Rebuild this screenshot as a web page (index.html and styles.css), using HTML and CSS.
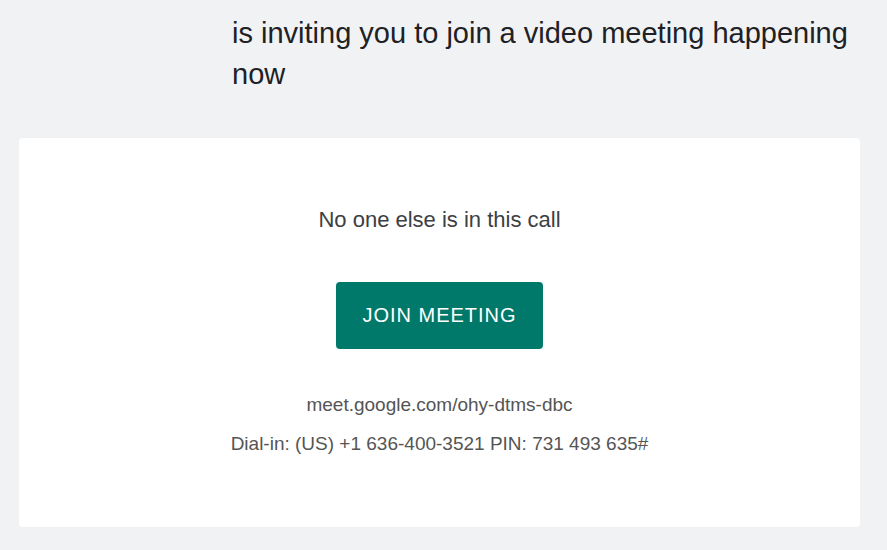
FILE: index.html
```html
<!DOCTYPE html>
<html>
<head>
    <title>Meeting Invite</title>
    <link rel="stylesheet" href="styles.css">
</head>
<body>
    <div class="page">
        <div class="invite-header">
            <p class="invite-text">is inviting you to join a video meeting happening now</p>
        </div>
        <div class="card">
            <p class="status">No one else is in this call</p>
            <a class="join-button" href="#">JOIN MEETING</a>
            <p class="meet-link">meet.google.com/ohy-dtms-dbc</p>
            <p class="dial-in">Dial-in: (US) +1 636-400-3521 PIN: 731 493 635#</p>
        </div>
    </div>
</body>
</html>
```

FILE: styles.css
```css
body {
    margin: 0;
    background: #f1f2f4;
    font-family: "Liberation Sans", Arial, sans-serif;
}
.page {
    padding: 13px 27px 22px 19px;
}
.invite-header {
    padding-left: 213px;
    height: 125px;
}
.invite-text {
    margin: 0;
    font-size: 29px;
    line-height: 41px;
    color: #202124;
}
.card {
    background: #fff;
    border-radius: 4px;
    height: 389px;
    box-sizing: border-box;
    padding-top: 66px;
    display: flex;
    flex-direction: column;
    align-items: center;
}
.status {
    margin: 0;
    font-size: 22px;
    line-height: 32px;
    color: #3c4043;
}
.join-button {
    margin-top: 46px;
    width: 207px;
    height: 67px;
    display: flex;
    align-items: center;
    justify-content: center;
    background: #00796b;
    color: #fff;
    text-decoration: none;
    border-radius: 4px;
    font-size: 20px;
    letter-spacing: 1px;
}
.meet-link {
    margin: 43px 0 0;
    font-size: 19px;
    line-height: 26px;
    color: #555;
}
.dial-in {
    margin: 13px 0 0;
    font-size: 19px;
    line-height: 26px;
    color: #555;
}
```
